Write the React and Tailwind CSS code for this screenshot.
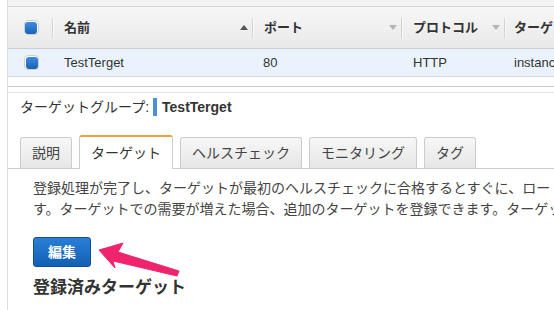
import React from 'react';

const font = "font-['Liberation_Sans','Noto_Sans_CJK_JP',sans-serif]";

const Check = () => (
  <span className="flex h-[15px] w-[15px] items-center justify-center rounded-[4px] border border-[#cfcfcf] bg-white">
    <span className="h-[12px] w-[12px] rounded-[3px] bg-gradient-to-b from-[#3f8ddf] to-[#1b62b8]" />
  </span>
);

const Sep = () => <span className="h-[20px] w-px bg-[#d2d2d2] shadow-[1px_0_0_#fafafa]" />;

const Sort = ({ up }) => (
  <svg width="8" height="5" viewBox="0 0 8 5" className="shrink-0">
    {up ? (
      <path d="M0 5 L4 0 L8 5 Z" fill="#555" />
    ) : (
      <path d="M0 0 L4 5 L8 0 Z" fill="#b5b5b5" />
    )}
  </svg>
);

const HeadCell = ({ label, up, w }) => (
  <div className={`flex h-full items-center ${w}`}>
    <span className="flex-1 pl-[11px] whitespace-nowrap">{label}</span>
    {up !== undefined && <Sort up={up} />}
    <span className="ml-[4px]" />
    <Sep />
  </div>
);

const tabs = ['説明', 'ターゲット', 'ヘルスチェック', 'モニタリング', 'タグ'];

export default function App() {
  return (
    <div className={`relative flex h-[310px] w-[554px] overflow-hidden bg-white text-[#333] ${font}`}>
      <div className="w-[7px] shrink-0 bg-white" />
      <div className="flex min-w-0 flex-1 flex-col border-l border-[#dcdcdc]">
        {/* table */}
        <div className="h-[7px] border-b border-[#d4d4d4] bg-[#f3f3f3]" />
        <div className="flex h-[42px] items-center border-b border-[#cfcfcf] bg-gradient-to-b from-[#f7f7f7] to-[#e9e9e9] text-[13px] font-bold">
          <div className="flex h-full w-[45px] shrink-0 items-center">
            <span className="flex w-[44px] justify-center pl-[2px]">
              <Check />
            </span>
            <Sep />
          </div>
          <HeadCell label="名前" up w="w-[200px] shrink-0" />
          <HeadCell label="ポート" up={false} w="w-[149px] shrink-0" />
          <HeadCell label="プロトコル" up={false} w="w-[103px] shrink-0" />
          <div className="flex h-full items-center pl-[9px] whitespace-nowrap">ターゲット</div>
        </div>
        <div className="flex h-[28px] items-center border-b border-[#d9d9d9] bg-[#eaf3fd] text-[13px]">
          <span className="flex w-[45px] shrink-0 justify-center pl-[2px]">
            <Check />
          </span>
          <span className="w-[200px] shrink-0 pl-[11px]">TestTerget</span>
          <span className="w-[149px] shrink-0 pl-[10px]">80</span>
          <span className="w-[103px] shrink-0 pl-[11px]">HTTP</span>
          <span className="pl-[9px] whitespace-nowrap">instance</span>
        </div>
        <div className="h-[9px]" />
        <div className="h-[7px] border-t border-b border-t-[#cbcbcb] border-b-[#e6e6e6]" />

        {/* detail */}
        <div className="mt-[4px] flex h-[20px] items-center pl-[12px] text-[14px]">
          <span>ターゲットグループ:</span>
          <span className="ml-[4px] h-[18px] w-[4px] bg-[#4a90d9]" />
          <span className="ml-[5px] font-bold">TestTerget</span>
        </div>

        <div className="mt-[18px] flex items-end gap-[7px] border-b border-[#cccccc] pl-[12px] text-[14px] text-[#444]">
          {tabs.map((t, i) =>
            i === 1 ? (
              <div
                key={t}
                className="-mb-px flex h-[34px] items-center rounded-t-[3px] border border-b-0 border-[#cccccc] border-t-2 border-t-[#f0a336] bg-white px-[11px] whitespace-nowrap text-[#333]"
              >
                {t}
              </div>
            ) : (
              <div
                key={t}
                className="flex h-[31px] items-center rounded-t-[3px] border border-b-0 border-[#cccccc] bg-gradient-to-b from-[#f7f7f7] to-[#e6e6e6] px-[11px] whitespace-nowrap"
              >
                {t}
              </div>
            )
          )}
        </div>

        <div className="pl-[25px] pt-[9px] text-[14px] leading-[21px] text-[#444]">
          <p className="whitespace-nowrap">
            登録処理が完了し、ターゲットが最初のヘルスチェックに合格するとすぐに、ロードバランサーはリクエストのルーティングを開始します。
          </p>
          <p className="whitespace-nowrap">
            す。ターゲットでの需要が増えた場合、追加のターゲットを登録できます。ターゲットを登録解除することもできます。
          </p>
          <button className="mt-[17px] flex h-[30px] w-[58px] items-center justify-center rounded-[3px] border border-[#0f4f96] bg-gradient-to-b from-[#2a7fd6] to-[#135fb3] text-[14px] font-bold text-white">
            編集
          </button>
          <h3 className="mt-[9px] text-[17px] font-bold leading-[24px] text-[#333]">登録済みターゲット</h3>
        </div>
      </div>

      {/* annotation arrow */}
      <svg className="pointer-events-none absolute left-0 top-0" width="554" height="310" viewBox="0 0 554 310">
        <path
          d="M99 250 L123 243 L118 252 L179 271 L177 276 L113 261 L115 268 Z"
          fill="#f0246c"
          stroke="#f0246c"
          strokeWidth="1"
          strokeLinejoin="round"
        />
      </svg>
    </div>
  );
}
